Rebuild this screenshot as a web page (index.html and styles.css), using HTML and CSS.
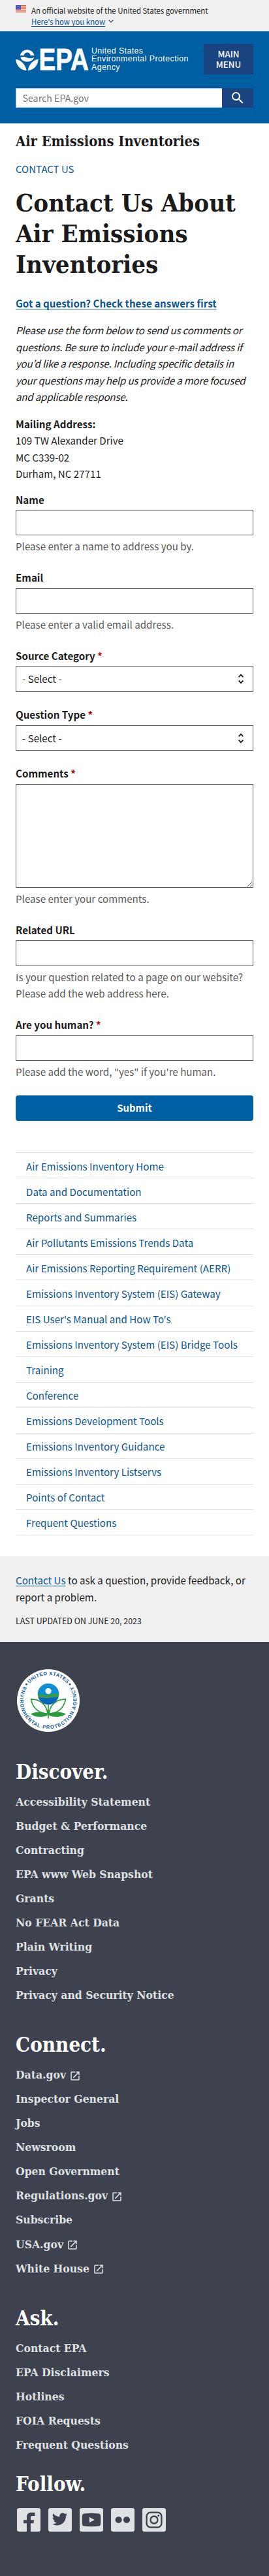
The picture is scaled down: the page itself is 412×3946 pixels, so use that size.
FILE: index.html
```html
<!DOCTYPE html>
<html lang="en">
<head>
<meta charset="utf-8">
<title>Contact Us About Air Emissions Inventories | US EPA</title>
<link rel="stylesheet" href="styles.css">
</head>
<body>
<svg class="defs" aria-hidden="true">
  <symbol id="ext" viewBox="0 0 24 24"><path d="M19 19H5V5h7V3H5a2 2 0 0 0-2 2v14a2 2 0 0 0 2 2h14c1.1 0 2-.9 2-2v-7h-2v7zM14 3v2h3.59l-9.83 9.83 1.41 1.41L19 6.41V10h2V3h-7z"/></symbol>
  <symbol id="sort" viewBox="0 0 10 20"><path d="M1.6 7.1 5 3.7l3.4 3.4M1.6 12.7 5 16.1l3.4-3.4"/></symbol>
</svg>

<section class="banner">
  <svg class="flag" viewBox="0 0 16 11"><path fill="#fff" d="M0 0h16v11H0z"/><path stroke="#db3e1f" stroke-width=".9" d="M0 .5h16M0 2.2h16M0 3.9h16M0 5.6h16M0 7.3h16M0 9h16M0 10.6h16"/><path fill="#1e33b1" d="M0 0h8v6.5H0z"/><path stroke="#fff" stroke-width=".8" stroke-dasharray=".8 1.2" d="M.8 1.2h7M1.8 2.6h6M.8 4h7M1.8 5.4h6"/></svg>
  <div>
    <p>An official website of the United States government</p>
    <p><a href="#">Here's how you know</a><svg class="chev" viewBox="0 0 8 5"><path d="m.7.7 3.3 3.2L7.3.7"/></svg></p>
  </div>
</section>

<header class="header">
  <div class="brand">
    <svg class="logo" viewBox="0 0 266 40">
      <g fill="#fff">
        <path d="M6.8 13.6a11 11 0 0 1 21.8 0c-2-1-3.8-1-5.800 0 0-3-2.300-5-5.100-5s-5.100 2-5.100 5c-2-1-3.800-1-5.800 0z"/>
        <path d="M7.300 16.200c3.500-2 7-1 10.400.2 3.500 1.200 7 1 10.500-.4-1.300 4-5.300 6.500-10.500 6.500S8.600 20 7.300 16.200z"/>
        <path d="M0 18.400c7.500 1.200 15 7.600 16.600 17.600C7.600 35.500 1 28.500 0 18.400zM34.800 18.400c-7.500 1.200-14.600 7.600-16.200 17.600C27.600 35.500 33.800 28.500 34.800 18.400z"/>
      </g>
      <text class="epa" x="35.500" y="34.700" textLength="76.500" lengthAdjust="spacingAndGlyphs">EPA</text>
      <g class="agency"><text x="116" y="10" textLength="79">United States</text><text x="116" y="22.300" textLength="148.500">Environmental Protection</text><text x="116" y="34.600" textLength="43.500">Agency</text></g>
    </svg>
    <button class="menu">MAIN<br>MENU</button>
  </div>
  <form class="search">
    <span class="query">Search EPA.gov</span>
    <button class="go" type="button" aria-label="Search"><svg viewBox="0 0 24 24"><path d="M15.500 14h-.790l-.280-.270A6.471 6.471 0 0 0 16 9.500 6.500 6.500 0 1 0 9.500 16c1.610 0 3.090-.590 4.230-1.570l.270.280v.790l5 4.990L20.490 19l-4.990-5zm-6 0C7.010 14 5 11.990 5 9.500S7.010 5 9.500 5 14 7.010 14 9.500 11.990 14 9.500 14z"/></svg></button>
  </form>
</header>

<main class="main">
  <h2 class="area">Air Emissions Inventories</h2>
  <a class="crumb" href="#">CONTACT US</a>
  <h1>Contact Us About Air Emissions Inventories</h1>
  <p><a class="strong" href="#">Got a question? Check these answers first</a></p>
  <p class="intro">Please use the form below to send us comments or<br>questions. Be sure to include your e-mail address if<br>you’d like a response. Including specific details in<br>your questions may help us provide a more focused<br>and applicable response.</p>
  <p><b>Mailing Address:</b><br>109 TW Alexander Drive<br>MC C339-02<br>Durham, NC 27711</p>

  <form class="form">
    <div class="field"><label>Name</label><div class="input"></div><p class="hint">Please enter a name to address you by.</p></div>
    <div class="field"><label>Email</label><div class="input"></div><p class="hint">Please enter a valid email address.</p></div>
    <div class="field"><label>Source Category <i>*</i></label><div class="input select">- Select -<svg viewBox="0 0 10 20"><use href="#sort"/></svg></div></div>
    <div class="field"><label>Question Type <i>*</i></label><div class="input select">- Select -<svg viewBox="0 0 10 20"><use href="#sort"/></svg></div></div>
    <div class="field"><label>Comments <i>*</i></label><textarea class="input area-input"></textarea><p class="hint">Please enter your comments.</p></div>
    <div class="field"><label>Related URL</label><div class="input"></div><p class="hint">Is your question related to a page on our website?<br>Please add the web address here.</p></div>
    <div class="field"><label>Are you human? <i>*</i></label><div class="input"></div><p class="hint">Please add the word, "yes" if you're human.</p></div>
    <button class="submit" type="button">Submit</button>
  </form>

  <nav class="side">
    <a href="#">Air Emissions Inventory Home</a>
    <a href="#">Data and Documentation</a>
    <a href="#">Reports and Summaries</a>
    <a href="#">Air Pollutants Emissions Trends Data</a>
    <a href="#">Air Emissions Reporting Requirement (AERR)</a>
    <a href="#">Emissions Inventory System (EIS) Gateway</a>
    <a href="#">EIS User's Manual and How To's</a>
    <a href="#">Emissions Inventory System (EIS) Bridge Tools</a>
    <a href="#">Training</a>
    <a href="#">Conference</a>
    <a href="#">Emissions Development Tools</a>
    <a href="#">Emissions Inventory Guidance</a>
    <a href="#">Emissions Inventory Listservs</a>
    <a href="#">Points of Contact</a>
    <a href="#">Frequent Questions</a>
  </nav>
</main>

<section class="prefooter">
  <p><a href="#">Contact Us</a> to ask a question, provide feedback, or report a problem.</p>
  <p class="updated">LAST UPDATED ON JUNE 20, 2023</p>
</section>

<footer class="footer">
  <svg class="seal" viewBox="0 0 100 100">
    <defs>
      <path id="arc-top" d="M11 50a39 39 0 0 1 78 0"/>
      <path id="arc-bottom" d="M18.900 19.700A43.400 43.400 0 1 0 81.100 19.700"/>
      <clipPath id="globe"><circle cx="50" cy="40" r="16.300"/></clipPath>
    </defs>
    <circle cx="50" cy="50" r="48" fill="#fff"/>
    <text><textPath href="#arc-top" startOffset="50%" text-anchor="middle" textLength="65">UNITED STATES</textPath></text>
    <text><textPath href="#arc-bottom" startOffset="50%" text-anchor="middle" textLength="182">ENVIRONMENTAL PROTECTION AGENCY</textPath></text>
    <g fill="#165b97"><circle cx="16.500" cy="25" r="1.600"/><circle cx="83" cy="25" r="1.600"/></g>
    <g clip-path="url(#globe)"><path fill="#0e8fd5" d="M30 20h40v22H30z"/><path fill="#3a9c45" d="M30 41c8-3 13 2 20 0s12-2 20 0v6H30z"/><path fill="#0b65c0" d="M30 46c8-2 14 1 20 0s12-1 20 0v14H30z"/></g>
    <circle cx="50" cy="35.500" r="4.600" fill="#fff"/>
    <path fill="#2b9a3c" d="M23 70.500c8-4.500 20-4 26 1 7-5 19-5.500 28-1-7 5.500-20 6-27 1.500-8 4.500-20 4-27-1.500z"/>
    <g fill="none" stroke="#2b9a3c" stroke-width="1.700"><path d="M23.500 47.800c14 0 24 9 25.500 22-13 0-23-8-25.500-22zM76.500 47.800c-14 0-24 9-25.500 22 13 0 23-8 25.500-22zM50 56v21.500"/></g>
  </svg>

  <h3 class="discover">Discover.</h3>
  <ul>
    <li>Accessibility Statement</li><li>Budget &amp; Performance</li><li>Contracting</li><li>EPA www Web Snapshot</li><li>Grants</li><li>No FEAR Act Data</li><li>Plain Writing</li><li>Privacy</li><li>Privacy and Security Notice</li>
  </ul>
  <h3>Connect.</h3>
  <ul>
    <li>Data.gov<svg class="ext"><use href="#ext"/></svg></li><li>Inspector General</li><li>Jobs</li><li>Newsroom</li><li>Open Government</li><li>Regulations.gov<svg class="ext"><use href="#ext"/></svg></li><li>Subscribe</li><li>USA.gov<svg class="ext"><use href="#ext"/></svg></li><li>White House<svg class="ext"><use href="#ext"/></svg></li>
  </ul>
  <h3>Ask.</h3>
  <ul>
    <li>Contact EPA</li><li>EPA Disclaimers</li><li>Hotlines</li><li>FOIA Requests</li><li>Frequent Questions</li>
  </ul>
  <h3 class="follow">Follow.</h3>
  <div class="social">
    <svg viewBox="0 0 36 36"><rect width="36" height="36" rx="3"/><path class="ink" d="M15 36V23.300h-5v-5.100h5v-4.400c0-4.600 2.600-7.100 6.800-7.100h5.600V12h-3.500c-2.300 0-3 1.200-3 2.700v3.500h5.300l-.9 5.100h-4.400V36z"/></svg>
    <svg viewBox="0 0 36 36"><rect width="36" height="36" rx="3"/><path class="ink" transform="translate(5.800 5.200) scale(.98)" d="M23.953 4.570a10 10 0 01-2.825.775 4.958 4.958 0 002.163-2.723c-.951.555-2.005.959-3.127 1.184a4.920 4.920 0 00-8.384 4.482C7.690 8.095 4.067 6.130 1.640 3.162a4.822 4.822 0 00-.666 2.475c0 1.710.870 3.213 2.188 4.096a4.904 4.904 0 01-2.228-.616v.060a4.923 4.923 0 003.946 4.827 4.996 4.996 0 01-2.212.085 4.936 4.936 0 004.604 3.417 9.867 9.867 0 01-6.102 2.105c-.390 0-.779-.023-1.170-.067a13.995 13.995 0 007.557 2.209c9.053 0 13.998-7.496 13.998-13.985 0-.210 0-.420-.015-.630A9.935 9.935 0 0024 4.590z"/></svg>
    <svg viewBox="0 0 36 36"><rect width="36" height="36" rx="3"/><path class="ink" d="M6.500 8.400Q18 7.300 29.500 8.400q2.500.3 2.600 3 .5 6.600 0 13.200-.1 2.700-2.600 3-11.500 1.100-23 0-2.500-.3-2.600-3-.5-6.600 0-13.200.1-2.700 2.600-3z"/><path d="m14.800 13.800 8 4.200-8 4.200z"/></svg>
    <svg viewBox="0 0 36 36"><rect width="36" height="36" rx="3"/><g class="ink"><circle cx="11.600" cy="18" r="5.100"/><circle cx="24" cy="18" r="5.100"/></g></svg>
    <svg viewBox="0 0 36 36"><rect width="36" height="36" rx="3"/><g class="ring"><rect x="6.600" y="6.600" width="22.800" height="22.800" rx="6"/><circle cx="18" cy="18" r="5.500"/></g><circle class="ink" cx="24.700" cy="11.400" r="1.500"/></svg>
  </div>
</footer>
</body>
</html>
```
FILE: styles.css
```css
* { box-sizing: border-box; }
body {
  margin: 0;
  background: #fff;
  color: #1b1b1b;
  font: 15.15px/25.44px "Noto Sans CJK JP", "Noto Sans", sans-serif;
}
p, h1, h2, h3, ul { margin: 0; padding: 0; }
ul { list-style: none; }
a { color: #0b5590; text-underline-offset: 2px; text-decoration-skip-ink: none; }
button { border: 0; padding: 0; font: inherit; color: #fff; }
svg { display: block; }
.defs { width: 0; height: 0; position: absolute; }

.banner {
  display: flex;
  gap: 8px;
  height: 48px;
  padding: 8px 24px;
  background: #f0f0f0;
  font-size: 11.42px;
  line-height: 16.5px;
}
.banner p { display: flex; align-items: center; white-space: nowrap; }
.flag { width: 16px; height: 11px; }
.chev { width: 8px; height: 5px; margin-left: 5px; fill: none; stroke: #3d4551; stroke-width: 1.3; }

.header {
  height: 141px;
  padding: 19px 24px 0;
  background: #005ea2;
}
.brand { display: flex; justify-content: space-between; height: 47px; }
.logo { width: 266px; height: 40px; margin-top: 5px; overflow: visible; }
.epa { font: bold 47px "Liberation Sans", sans-serif; fill: #fff; stroke: #fff; stroke-width: .8px; }
.agency { font: 12.4px "Liberation Sans", sans-serif; fill: #fff; }
.menu { width: 76px; background: #1a4480; font-size: 13.3px; font-weight: 500; line-height: 16px; }
.search { display: flex; height: 30px; margin-top: 20.5px; }
.query {
  width: 316px;
  padding-left: 9.5px;
  background: #fff;
  border: 1px solid #b9cad9;
  border-right: 0;
  color: #757575;
  font-size: 14.22px;
  line-height: 29px;
}
.go { display: flex; justify-content: center; width: 48px; padding-top: 3px; background: #1a4480; }
.go svg { width: 24px; height: 24px; fill: #fff; }

.main { padding: 13.4px 24px 32px; }
.area, h1, .footer { font-family: "DejaVu Serif Condensed", "DejaVu Serif", serif; font-weight: bold; }
.area { font-size: 21.74px; line-height: 30px; }
.crumb { display: block; margin-top: 14.6px; font-size: 15px; line-height: 24px; text-decoration: none; }
h1 { margin: 17.3px 0 23.3px; font-size: 38.09px; line-height: 46.7px; }
.strong { font-weight: bold; }
.intro { margin: 16.3px 0; font-style: italic; letter-spacing: -.21px; white-space: nowrap; }

.form { margin-top: 14px; }
.field { margin-bottom: 22.6px; }
label { display: block; font-weight: bold; }
label i { color: #b50909; font-style: normal; }
.input { display: block; width: 100%; height: 39.2px; margin-top: 3px; border: 1px solid #565c65; }
.area-input { height: 159.1px; background: #fff; outline: 0; }
.select { display: flex; justify-content: space-between; padding: 0 13px 0 9px; line-height: 37px; }
.select svg { width: 10px; height: 20px; margin-top: 9px; fill: none; stroke: #1b1b1b; stroke-width: 1.9; }
.hint { margin-top: 4px; color: #5a5a5a; white-space: nowrap; }
.submit { width: 100%; height: 39px; margin-top: 23.7px; display: block; border-radius: 4px; background: #005ea2; font-size: 14.89px; font-weight: bold; line-height: 38px; }

.side { margin-top: 48.5px; border-bottom: 1px solid #dfe1e2; }
.side a { display: block; height: 39.04px; padding: 9.6px 16px 0; border-top: 1px solid #dfe1e2; line-height: 20px; text-decoration: none; white-space: nowrap; }

.prefooter { height: 131.3px; padding: 24.7px 24px 0; background: #f0f0f0; }
.updated { margin-top: 13.3px; font-size: 12.42px; line-height: 20px; }

.footer { height: 1430.7px; padding: 40px 24px 0; background: #3e424e; color: #dfe1e2; }
.seal { width: 100px; height: 100px; }
.seal text { font: bold 7.6px "Liberation Sans", sans-serif; fill: #165b97; }
.footer h3 { margin: 37.2px 0 8px; color: #fff; font-size: 31px; line-height: 40px; }
.footer .discover { margin-top: 38.5px; }
.footer .follow { margin-top: 21px; }
.footer li { display: flex; align-items: center; height: 37.06px; font-size: 17.4px; line-height: 37.06px; }
.ext { width: 18px; height: 18px; margin: 2px 0 0 5px; fill: #dfe1e2; }
.social { display: flex; gap: 12px; margin-top: 17.3px; padding-left: 2px; }
.social svg { width: 36px; height: 36px; fill: #dfe1e2; }
.social .ink { fill: #3e424e; }
.social .ring { fill: none; stroke: #3e424e; stroke-width: 2.3; }
```
